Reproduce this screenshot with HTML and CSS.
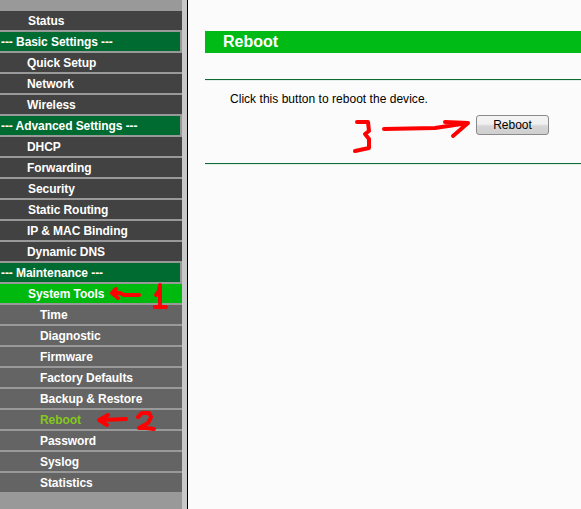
FILE: index.html
```html
<!DOCTYPE html>
<html>
<head>
<title>Reboot</title>
    <link rel="stylesheet" href="styles.css">
</head>
<body>
<div class="menu">
  <a class="item">Status</a>
  <a class="group">--- Basic Settings ---</a>
  <a class="item nudge">Quick Setup</a>
  <a class="item nudge">Network</a>
  <a class="item nudge">Wireless</a>
  <a class="group">--- Advanced Settings ---</a>
  <a class="item nudge">DHCP</a>
  <a class="item nudge">Forwarding</a>
  <a class="item">Security</a>
  <a class="item">Static Routing</a>
  <a class="item nudge">IP &amp; MAC Binding</a>
  <a class="item nudge">Dynamic DNS</a>
  <a class="group">--- Maintenance ---</a>
  <a class="item open">System Tools</a>
  <a class="sub">Time</a>
  <a class="sub">Diagnostic</a>
  <a class="sub">Firmware</a>
  <a class="sub">Factory Defaults</a>
  <a class="sub">Backup &amp; Restore</a>
  <a class="sub current">Reboot</a>
  <a class="sub">Password</a>
  <a class="sub">Syslog</a>
  <a class="sub">Statistics</a>
</div>
<div class="content">
  <h1 class="title">Reboot</h1>
  <div class="panel">
    <p class="hint">Click this button to reboot the device.</p>
    <div class="actions"><button class="btn" type="button">Reboot</button></div>
  </div>
</div>

<!-- red marks drawn over the screenshot -->
<svg class="marks" width="581" height="509" viewBox="0 0 581 509">
  <g fill="none" stroke="#f00" stroke-width="4" stroke-linecap="round" stroke-linejoin="round">
    <path d="M139 295 L124 295 L120 293 L112 293 M116 289 L112 293 L118 298"/>
    <path d="M160 285 L159 291 L156 295 M160 285 L160 306 M155 307 L166 307"/>
    <path d="M126 419 L101 420 M108 415 L99 420 L107 425"/>
    <path d="M138 417 L142 413 L149 413 L151 417 L148 423 L139 428 L146 428 L154 429"/>
    <path d="M357 122 L368 122 L369 131 L365 134 L369 139 L369 148 L355 151"/>
    <path d="M384 129 L435 128 L468 123 M445 122 L468 123 L453 136"/>
  </g>
</svg>
</body>
</html>
```

FILE: styles.css
```css
html, body {
  height: 100%;
}
body {
  margin: 0;
  display: flex;
  font-family: "Liberation Sans", Arial, sans-serif;
  font-size: 12px;
  background-color: #fbfbfb;
  overflow: hidden;
}

.menu {
  width: 182px;
  flex-shrink: 0;
  padding: 11px 0 0 0;
  display: flex;
  flex-direction: column;
  gap: 2px;
  background-color: #999999;
  border-right: 5px solid #c8c8c8;
  box-shadow: 1px 0 0 #000000;
}
.menu a {
  display: block;
  height: 18px;
  padding-top: 1px;
  line-height: 19px;
  font-weight: bold;
  letter-spacing: -0.07px;
  color: #ffffff;
  white-space: nowrap;
}
.item {
  padding-left: 28px;
  background-color: #424242;
}
.item.nudge {
  padding-left: 27px;
}
.item.open {
  background-color: #00b90f;
}
.group {
  width: 179px;
  padding-left: 1px;
  background-color: #006b31;
}
.sub {
  padding-left: 40px;
  background-color: #646464;
}
.menu .current {
  color: #84c81c;
}

.content {
  flex: 1;
  min-width: 0;
  padding: 31px 0 0 18px;
}
.title {
  margin: 0;
  height: 22px;
  line-height: 22px;
  padding-left: 18px;
  font-size: 16px;
  color: #ffffff;
  background-color: #00ba16;
}
.panel {
  margin-top: 26px;
  height: 83px;
  border-top: 1px solid #0d6b35;
  border-bottom: 1px solid #0d6b35;
  box-shadow: 0 1px 0 #e4efe8, inset 0 1px 0 #e4efe8;
}
.hint {
  margin: 0;
  padding: 12px 0 0 25px;
  line-height: 14px;
  letter-spacing: 0.03px;
  color: #000000;
}
.actions {
  padding: 9px 32px 0 0;
  display: flex;
  justify-content: flex-end;
}
.btn {
  width: 73px;
  height: 20px;
  padding: 0;
  font-family: inherit;
  font-size: 12px;
  color: #000000;
  border: 1px solid #8a8a8a;
  border-radius: 3px;
  background: linear-gradient(180deg, #f4f4f4, #f0f0f0 45%, #d6d6d6 55%, #cfcfcf);
}

.marks {
  position: absolute;
  left: 0;
  top: 0;
  pointer-events: none;
}
```
